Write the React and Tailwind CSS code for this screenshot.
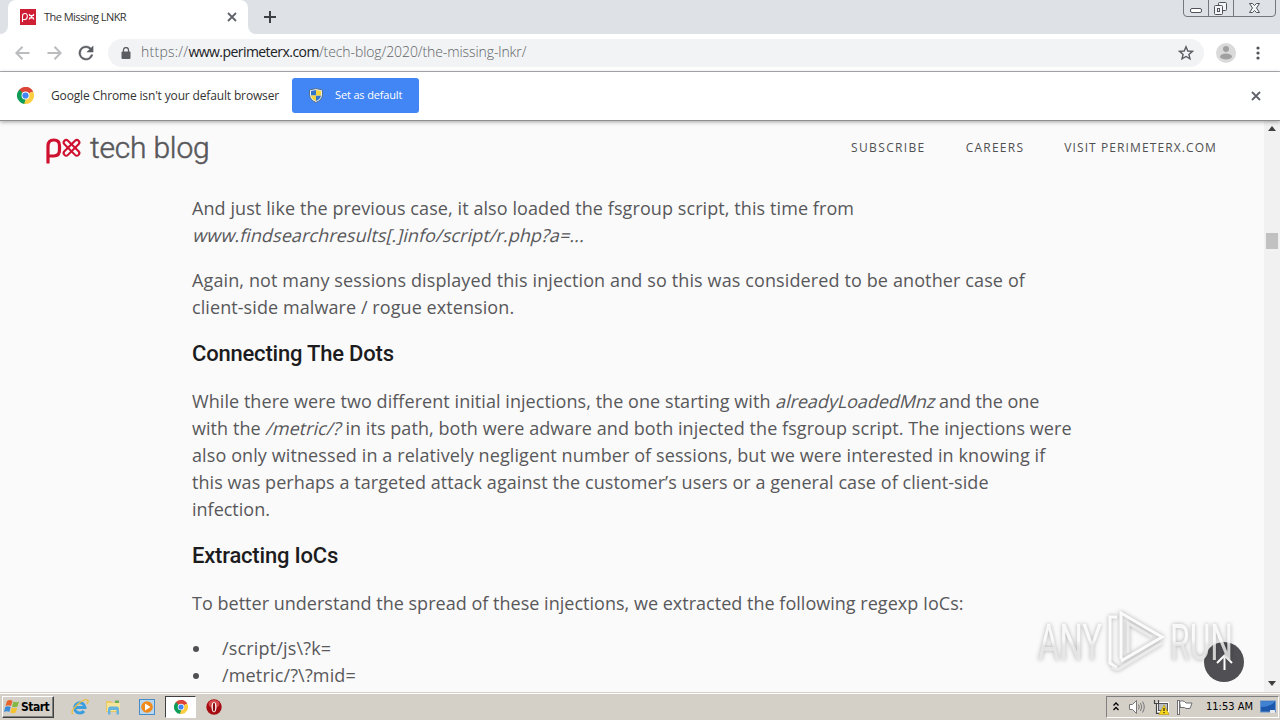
import React from 'react';

const navLinks = [
  { label: 'Subscribe', tracking: 'tracking-[1.35px]' },
  { label: 'Careers', tracking: 'tracking-[1.25px]' },
  { label: 'Visit PerimeterX.com', tracking: 'tracking-[1.1px]' },
];
const iocs = ['/script/js\\?k=', '/metric/?\\?mid='];

function ChromeLogo({ className }) {
  return (
    <svg className={className} viewBox="0 0 18 18">
      <path d="M9 9 L1.2 4.5 A9 9 0 0 1 16.8 4.5 Z" fill="#db4437" />
      <path d="M9 9 L16.8 4.5 A9 9 0 0 1 9 18 Z" fill="#ffcd40" />
      <path d="M9 9 L9 18 A9 9 0 0 1 1.2 4.5 Z" fill="#0f9d58" />
      <path d="M9 4.9 H17 L16.8 4.5 A9 9 0 0 0 9 0 Z" fill="#db4437" />
      <path d="M5.4 11 L1.2 4.5 L3 3 L7 8 Z" fill="#0f9d58" />
      <path d="M12.6 11 L9 18 L7.5 17.8 L10 12 Z" fill="#ffcd40" />
      <circle cx="9" cy="9" r="4.2" fill="#fff" />
      <circle cx="9" cy="9" r="3.3" fill="#4285f4" />
    </svg>
  );
}

function CloseIcon({ className }) {
  return (
    <svg className={className} viewBox="0 0 10 10" fill="none" stroke="currentColor" strokeWidth="1.8">
      <path d="M1 1 L9 9 M9 1 L1 9" />
    </svg>
  );
}

function TabStrip() {
  return (
    <div className="flex h-[34px] shrink-0 items-start justify-between bg-[#dee1e6]">
      <div className="flex h-full items-center">
        <div className="flex h-full w-2 items-end bg-white">
          <div className="h-full w-2 rounded-br-lg bg-[#dee1e6]" />
        </div>
        <div className="flex h-full w-[240px] items-center rounded-t-lg bg-white pr-[11px] pl-3">
          <div className="flex size-4 items-center justify-center bg-[#cf1f35]">
            <svg className="h-3 w-[14px]" viewBox="0 0 14 12" fill="none" stroke="#fff" strokeWidth="1.1">
              <path d="M1.5 11 V5 Q1.5 2.5 4 2.5 T6.3 5.5 T4 8.5 H1.5 M8 3 L13 8.5 M13 3 L8 8.5 M8 4.5 H13 M8 7 H13" />
            </svg>
          </div>
          <span className="ml-2 text-[11px] tracking-[-0.55px] text-[#333]">The Missing LNKR</span>
          <CloseIcon className="ml-auto size-[10px] text-[#5f6368]" />
        </div>
        <div className="flex h-full w-2 items-end bg-white">
          <div className="h-full w-2 rounded-bl-lg bg-[#dee1e6]" />
        </div>
        <svg className="ml-2 size-3" viewBox="0 0 12 12" stroke="#3c4043" strokeWidth="2">
          <path d="M6 0 V12 M0 6 H12" />
        </svg>
      </div>
      <svg className="mr-[3px] h-[17px] w-[94px]" viewBox="0 0 94 17" fill="none" stroke="#74777d">
        <path d="M0.5 0 V13 Q0.5 16.5 4 16.5 H89 Q92.5 16.5 92.5 13 V0 M25.5 0 V16 M50.5 0 V16" />
        <rect x="7.500" y="8.500" width="11" height="4" rx="1.500" fill="#fff" stroke="#505359" />
        <g fill="#f4f5f7" stroke="#505359">
          <rect x="35.500" y="2.500" width="8" height="8" rx="1" />
          <rect x="31.500" y="5.500" width="8" height="9" rx="1" />
          <rect x="34.500" y="8.500" width="2" height="3" />
          <path d="M66.500 3.500 H69.500 L71.500 5.500 L73.500 3.500 H76.500 L73.500 8 L76.500 12.500 H73.500 L71.500 10.500 L69.500 12.500 H66.500 L69.500 8 Z" />
        </g>
      </svg>
    </div>
  );
}

function Toolbar() {
  return (
    <div className="flex h-[38px] shrink-0 items-center border-b border-[#b0b0b5] bg-white pr-[17px] pl-[15px]">
      <svg className="h-[14px] w-[15px]" viewBox="0 0 15 14" fill="none" stroke="#babcbe" strokeWidth="2">
        <path d="M14.500 7 H1.500 M7.500 0.800 L1.300 7 L7.500 13.200" />
      </svg>
      <svg className="ml-[17px] h-[14px] w-[15px]" viewBox="0 0 15 14" fill="none" stroke="#babcbe" strokeWidth="2">
        <path d="M0.500 7 H13.500 M7.500 0.800 L13.700 7 L7.500 13.200" />
      </svg>
      <svg className="ml-4 size-4" viewBox="3 3 18 18" fill="#5a5d61" stroke="#5a5d61" strokeWidth="0.5">
        <path d="M17.650 6.350A7.960 7.960 0 0 0 12 4a8 8 0 1 0 7.730 10h-2.080A6 6 0 1 1 12 6c1.660 0 3.140.69 4.220 1.780L13 11h7V4z" />
      </svg>
      <div className="ml-[14px] flex h-7 w-[1096px] items-center rounded-full bg-[#f1f3f4] pr-[10px] pl-[13px]">
        <svg className="h-3 w-[10px]" viewBox="0 0 10 12">
          <path d="M2.500 5 V3 A2.300 2.300 0 0 1 7.500 3 V5" fill="none" stroke="#5a5d61" strokeWidth="1.3" />
          <rect x="0.500" y="4.500" width="9" height="7.500" rx="1" fill="#5a5d61" />
        </svg>
        <span className="ml-[10px] flex pb-[2px] text-[14px] font-light whitespace-nowrap text-[#5f6368]">
          <span className="tracking-[0.25px]">https://</span>
          <span className="font-normal tracking-[-0.55px] text-[#202124]">www.perimeterx.com</span>
          <span className="tracking-[-0.09px]">/tech-blog/2020/the-missing-lnkr/</span>
        </span>
        <svg className="ml-auto size-4" viewBox="0 0 16 16" fill="none" stroke="#5a5d61" strokeWidth="1.4">
          <path d="M8 1.800 L9.800 6 L14.400 6.400 L10.900 9.400 L12 13.900 L8 11.500 L4 13.900 L5.100 9.400 L1.600 6.400 L6.200 6 Z" />
        </svg>
      </div>
      <svg className="ml-3 size-5" viewBox="0 0 20 20">
        <circle cx="10" cy="10" r="10" fill="#dadada" />
        <circle cx="10" cy="6" r="3" fill="#a0a0a0" />
        <ellipse cx="10" cy="13.500" rx="6" ry="3" fill="#a0a0a0" />
      </svg>
      <svg className="ml-auto h-[14px] w-[10px]" viewBox="0 0 10 14" fill="#505357">
        <circle cx="5" cy="2" r="1.600" />
        <circle cx="5" cy="7" r="1.600" />
        <circle cx="5" cy="12" r="1.600" />
      </svg>
    </div>
  );
}

function InfoBar() {
  return (
    <div className="z-10 flex h-[49px] shrink-0 items-center border-b border-[#8f8f8f] bg-white pr-[19px] pb-px pl-[17px] shadow-[0_1px_4px_rgba(0,0,0,0.35)]">
      <ChromeLogo className="size-[17px]" />
      <span className="ml-[17px] w-[241px] text-[12px] tracking-[-0.15px] whitespace-nowrap text-[#333]">
        Google Chrome isn't your default browser
      </span>
      <button className="flex h-[35px] w-[127px] items-center rounded-[3px] bg-[#4285f4] pl-[17px] text-[11px] text-white">
        <svg className="h-[15px] w-[14px]" viewBox="0 0 14 15">
          <path d="M7 0.500 L13.500 2 V7 Q13 12 7 14.500 Q1 12 0.500 7 V2 Z" fill="#e8eef2" stroke="#55708a" />
          <path d="M7 2 V7.500 H2 V3 Z M7 7.500 H12 Q11.500 11 7 13 Z" fill="#3274c9" />
          <path d="M7 2 L12 3 V7.500 H7 Z M2 7.500 H7 V13 Q2.500 11 2 7.500 Z" fill="#f5d33c" />
        </svg>
        <span className="ml-3 tracking-[-0.15px] whitespace-nowrap">Set as default</span>
      </button>
      <CloseIcon className="ml-auto size-[10px] text-[#5f6368]" />
    </div>
  );
}

function BlogHeader() {
  return (
    <header className="flex h-[52px] items-center justify-between pt-[2px] pr-[47px] pl-[46px]">
      <div className="flex items-center">
        <svg className="mt-[5px] h-[27px] w-9" viewBox="0 0 36 27" fill="none" stroke="#cf1130">
          <path d="M2 26.500 V9 Q2 3 7.800 3 Q13.500 3 13.500 8.500 V13 Q13.500 19 7.800 19 H2" strokeWidth="3.2" />
          <g strokeWidth="2.100">
            <rect x="15.500" y="8.300" width="20" height="5" rx="2.500" transform="rotate(45 25.500 10.800)" />
            <rect x="15.500" y="8.300" width="20" height="5" rx="2.500" transform="rotate(-45 25.500 10.800)" />
          </g>
        </svg>
        <span className="ml-2 font-['Roboto'] text-[30px] leading-[40px] font-light tracking-[-0.2px] whitespace-nowrap text-[#58585a] [-webkit-text-stroke:0.5px_#58585a]">
          tech blog
        </span>
      </div>
      <nav className="flex gap-10">
        {navLinks.map((link) => (
          <a key={link.label} className={`text-[12px] whitespace-nowrap text-[#505052] uppercase ${link.tracking}`}>
            {link.label}
          </a>
        ))}
      </nav>
    </header>
  );
}

function Heading({ children }) {
  return (
    <h2 className="pb-[2px] font-['Roboto'] text-[22px] leading-[29px] font-medium tracking-[-0.2px] whitespace-nowrap text-[#1c1c1e]">
      {children}
    </h2>
  );
}

// upright face slanted, the blog has no real italic
function Slanted({ children }) {
  return <em className="inline-block origin-[0_75%] -skew-x-[14deg] not-italic">{children}</em>;
}

function Article() {
  return (
    <article className="mt-[22px] ml-48 flex flex-col gap-[18px] text-[18px] leading-[27px] whitespace-nowrap text-[#58585a]">
      <div>
        <p className="tracking-[0.085px]">And just like the previous case, it also loaded the fsgroup script, this time from</p>
        <p className="tracking-[0.085px]">
          <Slanted>www.findsearchresults[.]info/script/r.php?a=...</Slanted>
        </p>
      </div>
      <div>
        <p className="tracking-[0.12px]">
          Again, not many sessions displayed this injection and so this was considered to be another case of
        </p>
        <p className="tracking-[0.08px]">client-side malware / rogue extension.</p>
      </div>
      <Heading>Connecting The Dots</Heading>
      <div>
        <p className="tracking-[0.06px]">
          While there were two different initial injections, the one starting with{' '}
          <span className="tracking-[-0.06px]">
            <Slanted>alreadyLoadedMnz</Slanted> and the one
          </span>
        </p>
        <p className="tracking-[0.06px]">
          with the <Slanted>/metric/?</Slanted> in its path, both were adware and both injected the fsgroup script. The injections were
        </p>
        <p className="tracking-[0.1px]">
          also only witnessed in a relatively negligent number of sessions, but we were interested in knowing if
        </p>
        <p className="tracking-[0.07px]">
          this was perhaps a targeted attack against the customer’s users or a general case of client-side
        </p>
        <p>infection.</p>
      </div>
      <Heading>Extracting IoCs</Heading>
      <p className="tracking-[0.02px]">
        To better understand the spread of these injections, we extracted the following regexp IoCs:
      </p>
      <ul className="tracking-[0.16px]">
        {iocs.map((ioc) => (
          <li key={ioc} className="flex items-center">
            <span className="mr-[23px] ml-px size-[6px] rounded-full bg-[#505052]" />
            {ioc}
          </li>
        ))}
      </ul>
    </article>
  );
}

function Watermark() {
  return (
    <svg
      className="absolute top-[480px] left-[1030px] h-[80px] w-[210px] drop-shadow-[0_0_2px_rgba(0,0,0,0.35)]"
      viewBox="0 0 210 80"
    >
      <defs>
        <linearGradient id="fade" x1="0" y1="0" x2="0" y2="1">
          <stop offset="0.450" stopColor="#fff" />
          <stop offset="0.550" stopColor="#e9e9e9" />
        </linearGradient>
      </defs>
      <g fill="url(#fade)" fontFamily="Roboto" fontSize="50" opacity="0.850">
        <text x="8" y="59" textLength="64" lengthAdjust="spacingAndGlyphs">ANY</text>
        <text x="140" y="59" textLength="63" lengthAdjust="spacingAndGlyphs">RUN</text>
      </g>
      <g fill="none" stroke="#fff" strokeWidth="3" opacity="0.900">
        <path d="M87 16 H80 V62 L87 67 M91 58 V12 L132 36 L91 60" />
        <path d="M98 52 V22 L122 36 M132 42 L92 66 Q87 71 82 66" stroke="#eee" />
      </g>
    </svg>
  );
}

function Page() {
  return (
    <div className="relative flex h-[571px] shrink-0 overflow-hidden bg-[#fafafa]">
      <main className="w-[1264px]">
        <BlogHeader />
        <Article />
      </main>
      <div className="flex w-4 flex-col items-center justify-between bg-[#f1f1f1] pt-[5px] pb-[6px]">
        <svg className="h-[5px] w-2" viewBox="0 0 8 5" fill="#404040">
          <path d="M4 0 L8 5 H0 Z" />
        </svg>
        <div className="mt-[102px] mb-auto h-4 w-3 bg-[#c1c1c1]" />
        <svg className="h-[5px] w-2" viewBox="0 0 8 5" fill="#404040">
          <path d="M4 5 L8 0 H0 Z" />
        </svg>
      </div>
      <button className="absolute top-[521px] left-[1204px] flex size-10 items-center justify-center rounded-full bg-[#505054]">
        <svg className="h-4 w-[17px]" viewBox="0 0 17 16" fill="none" stroke="#fff" strokeWidth="2">
          <path d="M8.500 16 V1.500 M1 9 L8.500 1.500 L16 9" />
        </svg>
      </button>
      <Watermark />
    </div>
  );
}

function Taskbar() {
  return (
    <div className="flex h-7 shrink-0 items-center border-t border-[#d4d0c8] bg-[#d4d0c8] pr-px pl-[2px] font-['DejaVu_Sans_Condensed',sans-serif] shadow-[inset_0_1px_0_#fff]">
      <button className="flex h-[22px] w-[52px] items-center border border-t-white border-r-[#404040] border-b-[#404040] border-l-white pl-px text-[12px] font-bold tracking-[-0.500px] text-black shadow-[inset_-1px_-1px_0_#808080]">
        <svg className="mr-px h-[15px] w-4 shrink-0" viewBox="0 0 16 15">
          <path d="M3 2 Q6 0 8.500 2 L7 7 Q4.500 5.500 1.500 7 Z" fill="#e8622c" />
          <path d="M9.500 2.500 Q12 4 15 2.500 L13.500 7.500 Q10.500 9 8 7.500 Z" fill="#83b940" />
          <path d="M1.200 8 Q4 6.500 6.700 8 L5.300 13 Q3 11.500 0 13 Z" fill="#3d8ad8" />
          <path d="M7.700 8.500 Q10.500 10 13.200 8.500 L11.800 13.500 Q9 15 6.300 13.500 Z" fill="#f5c332" />
        </svg>
        Start
      </button>
      <svg className="ml-[17px] h-[18px] w-[18px]" viewBox="0 0 18 18" fill="none">
        <path d="M4 9.500 H14 A5.200 5.200 0 1 0 13 13" stroke="#3b9fdf" strokeWidth="3" />
        <path d="M2 16 Q-1 14 5 8 Q13 0 16.500 2 Q18 3 16 6" stroke="#edbd3d" strokeWidth="1.300" />
      </svg>
      <svg className="ml-4 h-4 w-4" viewBox="0 0 16 16">
        <path d="M1 2 H6 L7 3.500 H14 V13 H1 Z" fill="#e9c963" />
        <path d="M2 4 H15 V12 H2 Z" fill="#f7e49b" />
        <path d="M3 15.500 V10 Q3 7.500 5 7.500 H12 Q14 7.500 14 10 V15.500 H11.500 V11 H5.500 V15.500 Z" fill="#66b4de" />
        <path d="M10 1.500 H14 V4 H10 Z" fill="#6daf54" />
      </svg>
      <svg className="ml-[18px] h-4 w-4" viewBox="0 0 16 16">
        <rect x="0.500" y="0.500" width="15" height="15" fill="#b9d7ee" stroke="#478cc8" />
        <circle cx="8" cy="8" r="5.800" fill="#f08a1c" />
        <path d="M6 4.500 L11.500 8 L6 11.500 Z" fill="#fff" />
      </svg>
      <div className="ml-[10px] flex h-[22px] w-[31px] items-center justify-center border border-t-[#404040] border-r-white border-b-white border-l-[#404040] bg-white">
        <ChromeLogo className="size-[14px]" />
      </div>
      <svg className="ml-[10px] h-4 w-4" viewBox="0 0 16 16">
        <circle cx="8" cy="8" r="7.700" fill="#a60d12" />
        <ellipse cx="8" cy="5" rx="5.500" ry="4" fill="#d4484a" />
        <ellipse cx="8" cy="8" rx="2.500" ry="5.300" fill="#fff" />
        <ellipse cx="8" cy="8" rx="1.200" ry="4.500" fill="#8e0b10" />
      </svg>
      <div className="ml-auto flex h-[22px] w-[173px] items-center border border-t-[#808080] border-r-white border-b-white border-l-[#808080] pl-[6px]">
        <svg className="h-[9px] w-[6px]" viewBox="0 0 6 9" fill="none" stroke="#000" strokeWidth="1.300">
          <path d="M0.500 3.500 L3 1 L5.500 3.500 M0.500 8 L3 5.500 L5.500 8" />
        </svg>
        <svg className="ml-[10px] h-4 w-4" viewBox="0 0 16 16" fill="none" stroke="#77777a">
          <path d="M0.500 5.500 H3.500 L7.500 1.500 V14.500 L3.500 10.500 H0.500 Z" fill="#fff" />
          <path d="M9.500 5.500 Q11 8 9.500 10.500 M11.500 4 Q14 8 11.500 12 M13.500 2.500 Q17 8 13.500 13.500" />
        </svg>
        <svg className="ml-2 h-4 w-4" viewBox="0 0 16 16" fill="none" stroke="#55555a">
          <rect x="4.500" y="3.500" width="11" height="9" fill="#b9bec4" stroke="#fff" />
          <rect x="5.500" y="4.500" width="9" height="7" />
          <path d="M1.500 1 V4.500 H5.500 V1 M3.500 4.500 V14.500 H6" stroke="#444" strokeWidth="1.200" />
          <path d="M11 6 L16 15.500 H6 Z" fill="#f9d51c" stroke="#b79500" strokeWidth="0.600" />
          <path d="M11 9 V12 M11 13 V14.300" stroke="#222" strokeWidth="1.200" />
        </svg>
        <svg className="ml-2 h-4 w-4" viewBox="0 0 16 16" fill="#fff" stroke="#707074">
          <path d="M2.500 2.500 Q5 1 7.500 2.500 L9 4 H15 L13 9.500 H9 L7.500 8.500 H3.500 V9 Z" />
          <rect x="0.500" y="1.500" width="2" height="14" />
        </svg>
        <span className="ml-[13px] pt-[2px] text-[11px] whitespace-nowrap text-black">11:53 AM</span>
        <svg className="mr-[2px] ml-auto h-[14px] w-4" viewBox="0 0 16 14">
          <rect x="0.500" y="1" width="15" height="11" fill="#1d58ad" stroke="#6793c8" />
          <path d="M1 1.500 H15 Q10 7 1 7 Z" fill="#4183d2" />
          <rect x="10" y="10" width="5" height="3" fill="#e5e8ed" />
        </svg>
      </div>
    </div>
  );
}

function App() {
  return (
    <div className="flex h-[720px] w-[1280px] flex-col overflow-hidden bg-white font-['Open_Sans',sans-serif]">
      <TabStrip />
      <Toolbar />
      <InfoBar />
      <Page />
      <Taskbar />
    </div>
  );
}

export default App;
